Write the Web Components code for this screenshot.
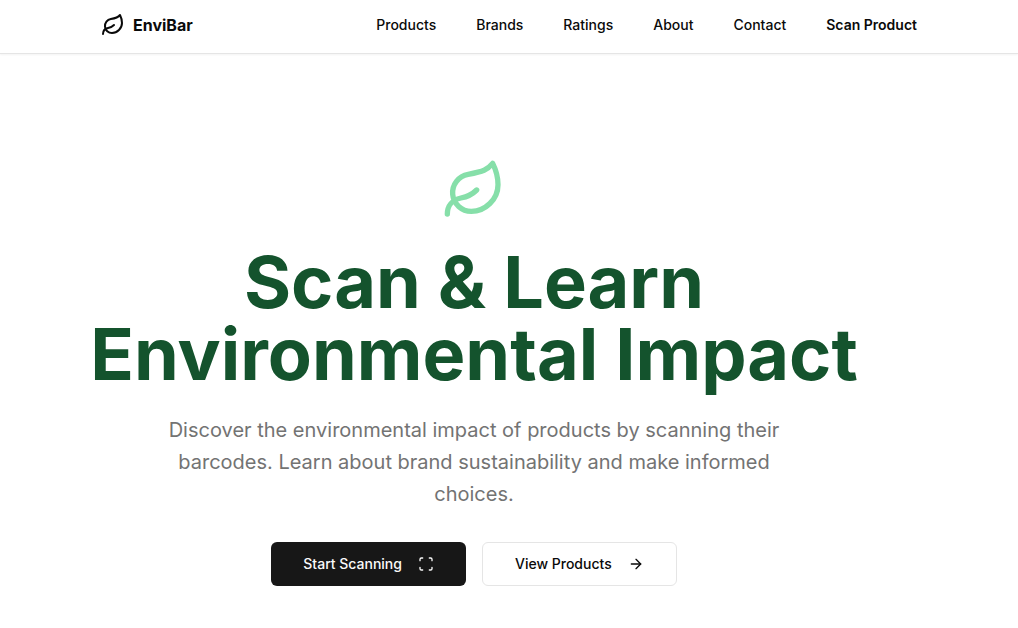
<!DOCTYPE html>
<html lang="en">
<head>
<meta charset="utf-8">
<meta name="viewport" content="width=device-width, initial-scale=1">
<title>EnviBar</title>
<style>
  body { margin: 0; background: #fff; color: #0a0a0a; font-family: Inter, "Liberation Sans", sans-serif; font-size: 14px; line-height: 20px; }
</style>
</head>
<body>
<envi-header>
  <nav-link href="#products">Products</nav-link>
  <nav-link href="#brands">Brands</nav-link>
  <nav-link href="#ratings">Ratings</nav-link>
  <nav-link href="#about">About</nav-link>
  <nav-link href="#contact">Contact</nav-link>
  <nav-link href="#scan" strong>Scan Product</nav-link>
</envi-header>
<envi-hero>
  <span slot="title">Scan &amp; Learn Environmental Impact</span>
  <span slot="lead">Discover the environmental impact of products by scanning their barcodes. Learn about brand sustainability and make informed choices.</span>
  <action-button slot="actions" variant="primary" icon="scan">Start Scanning</action-button>
  <action-button slot="actions" variant="outline" icon="arrow">View Products</action-button>
</envi-hero>
<script>
const ICONS = {
  leaf: '<path d="M11 20A7 7 0 0 1 9.8 6.1C15.5 5 17 4.48 19 2c1 2 2 4.18 2 8 0 5.5-4.78 10-10 10Z"/><path d="M2 21c0-3 1.85-5.36 5.08-6C9.5 14.52 12 13 13 12"/>',
  scan: '<path d="M3 7V5a2 2 0 0 1 2-2h2"/><path d="M17 3h2a2 2 0 0 1 2 2v2"/><path d="M21 17v2a2 2 0 0 1-2 2h-2"/><path d="M7 21H5a2 2 0 0 1-2-2v-2"/>',
  arrow: '<path d="M5 12h14"/><path d="m12 5 7 7-7 7"/>'
};

class LineIcon extends HTMLElement {
  connectedCallback() {
    if (this.shadowRoot) return;
    this.attachShadow({ mode: 'open' }).innerHTML = `
      <style>
        :host { display: block; flex: none; width: var(--icon-size, 16px); height: var(--icon-size, 16px); }
        svg { display: block; width: 100%; height: 100%; }
      </style>
      <svg viewBox="0 0 24 24" fill="none" stroke="currentColor" stroke-width="2" stroke-linecap="round" stroke-linejoin="round" aria-hidden="true">${ICONS[this.getAttribute('name')]}</svg>`;
  }
}

class NavLink extends HTMLElement {
  connectedCallback() {
    if (this.shadowRoot) return;
    this.attachShadow({ mode: 'open' }).innerHTML = `
      <style>
        :host { display: block; white-space: nowrap; font-weight: 500; }
        :host([strong]) { font-weight: 600; }
        a { color: inherit; text-decoration: none; }
        a:hover { text-decoration: underline; text-underline-offset: 4px; }
      </style>
      <a href="${this.getAttribute('href')}"><slot></slot></a>`;
  }
}

class EnviHeader extends HTMLElement {
  connectedCallback() {
    if (this.shadowRoot) return;
    this.attachShadow({ mode: 'open' }).innerHTML = `
      <style>
        :host { display: block; border-bottom: 1px solid #e5e5e5; box-shadow: 0 1px 2px rgba(0, 0, 0, .05); }
        header { display: flex; align-items: center; justify-content: space-between; max-width: 816px; margin: 0 auto; padding: 13px 0 16px; }
        .brand { display: flex; align-items: center; gap: 8px; color: inherit; text-decoration: none; font-size: 16px; line-height: 24px; font-weight: 700; }
        .brand line-icon { --icon-size: 24px; }
        nav { display: flex; gap: 40px; }
      </style>
      <header>
        <a class="brand" href="#"><line-icon name="leaf"></line-icon>EnviBar</a>
        <nav aria-label="Main"><slot></slot></nav>
      </header>`;
  }
}

class EnviHero extends HTMLElement {
  connectedCallback() {
    if (this.shadowRoot) return;
    this.attachShadow({ mode: 'open' }).innerHTML = `
      <style>
        :host { display: block; padding: 104px 70px 42px 0; }
        section { display: flex; flex-direction: column; align-items: center; max-width: 768px; margin: 0 auto; text-align: center; }
        line-icon { --icon-size: 64px; color: #86dfa9; }
        h1 { margin: 24px 0 0; color: #14532d; font-size: 72px; line-height: 72px; font-weight: 700; }
        p { margin: 24px 0 0; max-width: 640px; color: #737373; font-size: 20px; line-height: 32px; }
        .actions { display: flex; flex-wrap: wrap; justify-content: center; gap: 16px; margin-top: 32px; }
      </style>
      <section>
        <line-icon name="leaf"></line-icon>
        <h1><slot name="title"></slot></h1>
        <p><slot name="lead"></slot></p>
        <div class="actions"><slot name="actions"></slot></div>
      </section>`;
  }
}

class ActionButton extends HTMLElement {
  connectedCallback() {
    if (this.shadowRoot) return;
    this.attachShadow({ mode: 'open' }).innerHTML = `
      <style>
        :host { display: block; }
        button { display: flex; align-items: center; gap: 16px; box-sizing: border-box; height: 44px; padding: 0 32px; border: 0; border-radius: 6px; background: #171717; color: #fafafa; font: inherit; font-weight: 500; white-space: nowrap; cursor: pointer; }
        :host([variant="outline"]) button { border: 1px solid #e5e5e5; background: #fff; color: #0a0a0a; }
      </style>
      <button type="button"><slot></slot><line-icon name="${this.getAttribute('icon')}"></line-icon></button>`;
  }
}

customElements.define('line-icon', LineIcon);
customElements.define('nav-link', NavLink);
customElements.define('envi-header', EnviHeader);
customElements.define('envi-hero', EnviHero);
customElements.define('action-button', ActionButton);
</script>
</body>
</html>
